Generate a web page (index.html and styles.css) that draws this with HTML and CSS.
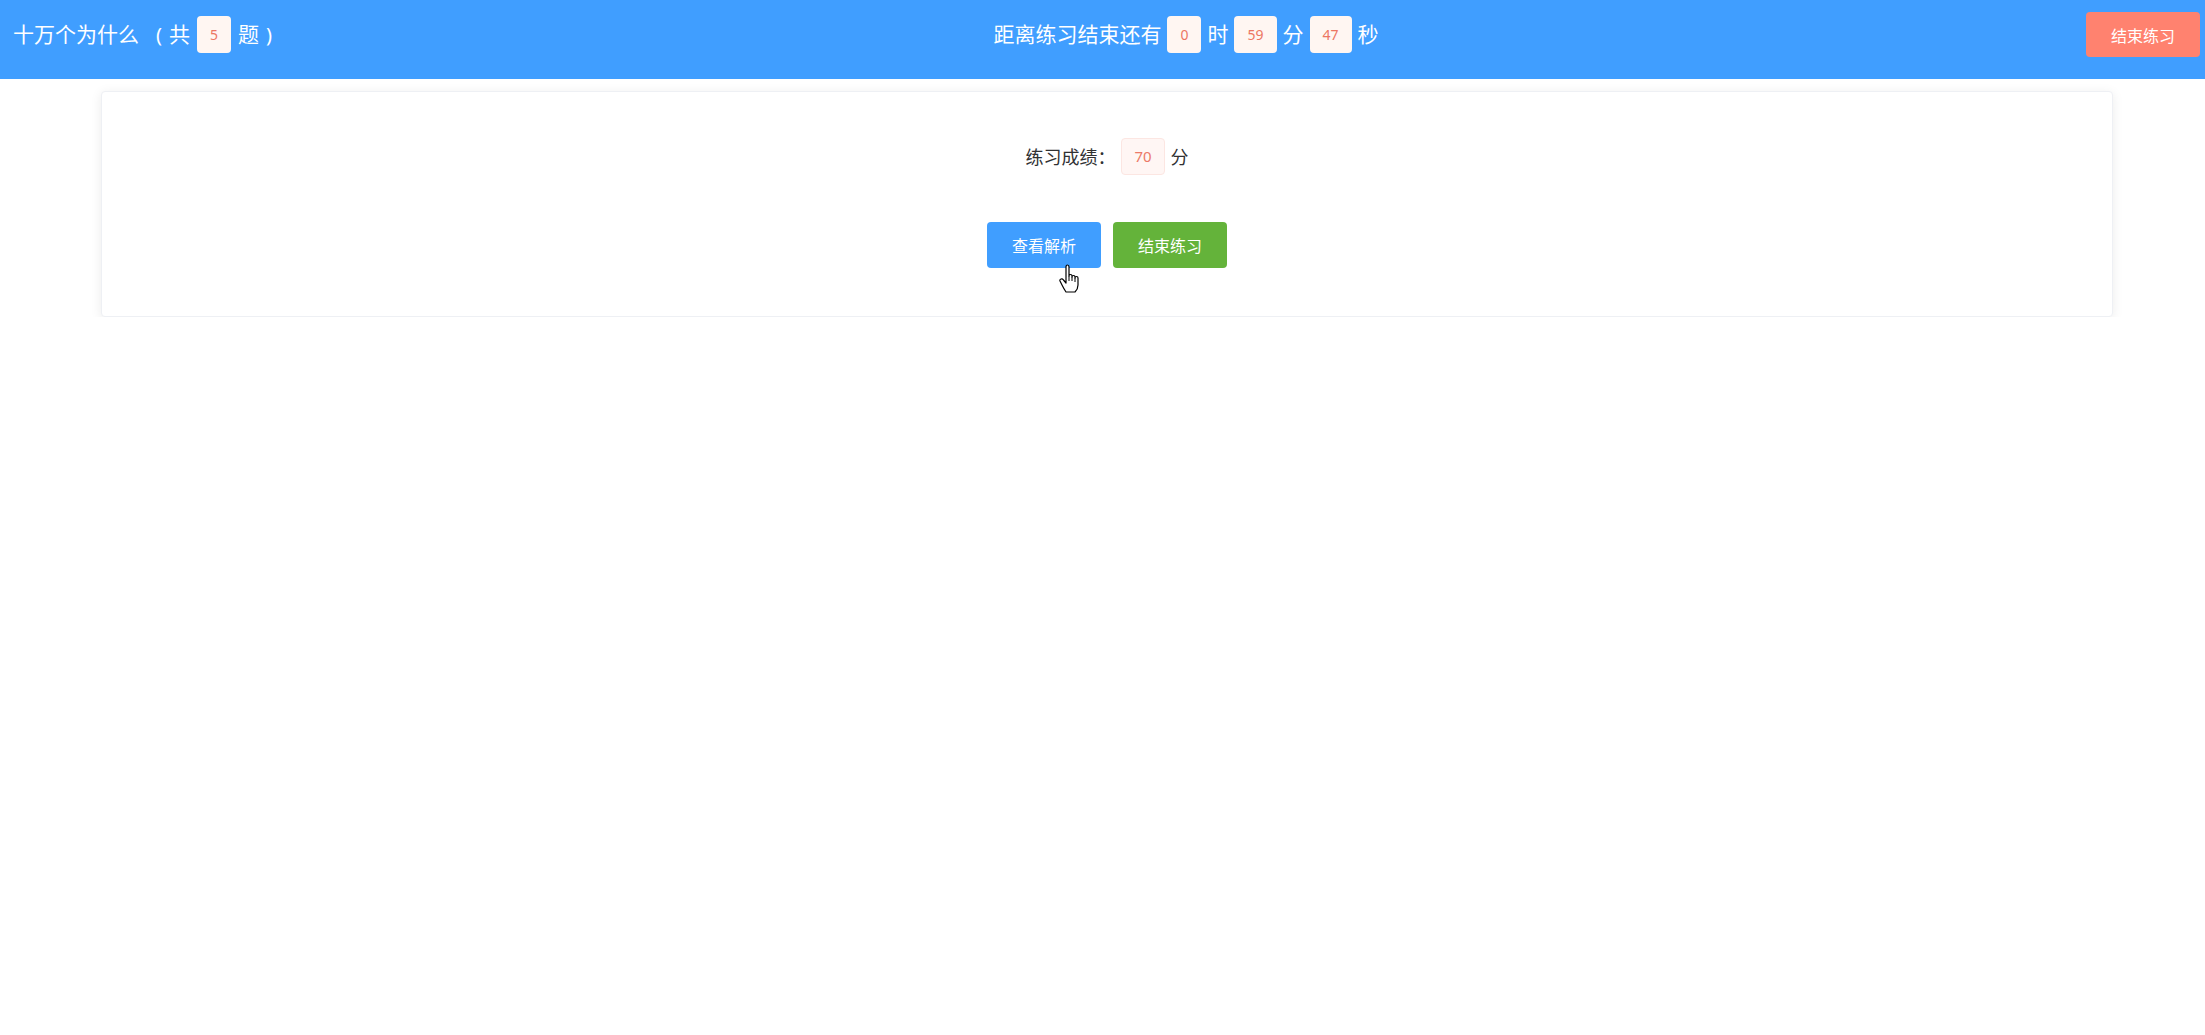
FILE: index.html
```html
<!DOCTYPE html>
<html lang="zh-CN">
<head>
<meta charset="utf-8">
<title>十万个为什么</title>
<link rel="stylesheet" href="styles.css">
</head>
<body>
<header class="topbar">
  <div class="title-group">
    <span class="title">十万个为什么</span>
    <span class="paren">(</span>
    <span>共</span>
    <span class="badge">5</span>
    <span>题</span>
    <span class="paren">)</span>
  </div>
  <div class="timer">
    <span>距离练习结束还有</span>
    <span class="badge">0</span>
    <span>时</span>
    <span class="badge">59</span>
    <span>分</span>
    <span class="badge">47</span>
    <span>秒</span>
  </div>
  <button class="btn btn-end-top">结束练习</button>
</header>
<main class="main">
  <section class="card">
    <div class="score-row">
      <span>练习成绩：</span>
      <span class="score-badge">70</span>
      <span>分</span>
    </div>
    <div class="actions">
      <button class="btn btn-primary">查看解析
        <svg class="cursor" width="22" height="30" viewBox="0 0 22 30"><path d="M7 3q0-2 1.5-2q1.5 0 1.5 2v9q0-1.5 1.5-1.5q1.5 0 1.5 1.5v1q0-1.5 1.5-1.5q1.5 0 1.5 1.5v1q0-1.5 1.5-1.5q1.5 0 1.5 1.5v7q0 4-3 7h-9q-2-3-4-7l-2-4q-.5-1.5 1-2q1.5-.5 2.5 1l2.5 3z" fill="#fff" stroke="#000" stroke-width="1.2" stroke-linejoin="round"/><path d="M10 12v5M13 13v4M16 14v4" stroke="#000" stroke-width="1"/></svg>
      </button>
      <button class="btn btn-success">结束练习</button>
    </div>
  </section>
</main>
</body>
</html>
```
FILE: styles.css
```css
html, body {
  margin: 0;
  padding: 0;
  background: #ffffff;
  font-family: "Noto Sans", "Noto Sans CJK SC", sans-serif;
}

.topbar {
  height: 79px;
  box-sizing: border-box;
  background: #409eff;
  color: #ffffff;
  display: flex;
  align-items: center;
  justify-content: space-between;
  padding: 0 5px 10px 13px;
  font-size: 21px;
}

.title-group,
.timer {
  display: flex;
  align-items: center;
  gap: 7px;
  line-height: 1;
}

.timer {
  gap: 6px;
  margin-left: 14px;
}

.title {
  margin-right: 10px;
}

.paren {
  font-size: 20px;
}

.badge {
  height: 37px;
  min-width: 34px;
  box-sizing: border-box;
  padding: 0 13px;
  display: inline-flex;
  align-items: center;
  justify-content: center;
  background: #fff6f2;
  color: #ec7663;
  border-radius: 4px;
  font-size: 14px;
}

.btn {
  border: none;
  border-radius: 4px;
  color: #ffffff;
  font-family: "Noto Sans CJK SC", sans-serif;
  font-size: 16px;
  width: 114px;
  height: 46px;
  padding: 0;
  cursor: pointer;
}

.btn-end-top {
  background: #ff826f;
  height: 45px;
}

.main {
  padding: 12px 92px 0 101px;
}

.card {
  background: #ffffff;
  border: 1px solid #eef0f4;
  border-radius: 4px;
  box-shadow: 0 2px 12px rgba(0, 0, 0, 0.08);
  padding: 46px 0 48px;
  display: flex;
  flex-direction: column;
  align-items: center;
  gap: 47px;
}

.score-row {
  display: flex;
  align-items: center;
  gap: 4px;
  font-size: 18px;
  color: #303133;
  line-height: 1;
}

.score-badge {
  height: 37px;
  box-sizing: border-box;
  padding: 0 12px;
  display: inline-flex;
  align-items: center;
  justify-content: center;
  background: #fff6f4;
  border: 1px solid #fce6e2;
  color: #ec7a68;
  border-radius: 4px;
  font-size: 15px;
  margin: 0 2px;
}

.actions {
  display: flex;
  gap: 12px;
}

.btn-primary {
  background: #409eff;
  position: relative;
}

.btn-success {
  background: #64b33a;
}

.cursor {
  position: absolute;
  left: 72px;
  top: 42px;
}
```
